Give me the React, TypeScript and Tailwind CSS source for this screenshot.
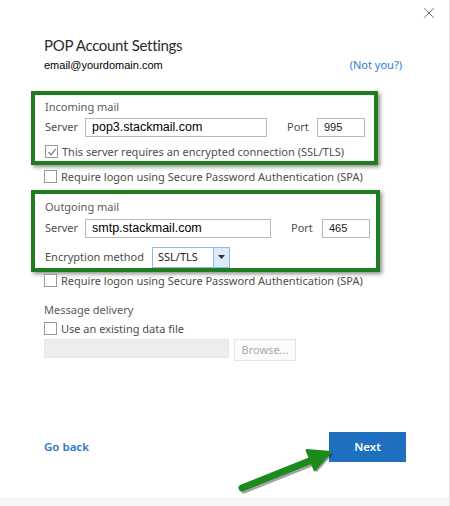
import { X } from "lucide-react";

const ui = "font-['Noto_Sans',sans-serif]";
const arial = "font-['Liberation_Sans',Arial,sans-serif]";

function Box({ checked }: { checked?: boolean }) {
  return (
    <span className="flex h-[13px] w-[13px] shrink-0 items-center justify-center border border-[#9a9a9a] bg-white">
      {checked && (
        <svg width="10" height="10" viewBox="0 0 10 10">
          <path d="M1.5 5.2 L4 7.8 L8.6 2" fill="none" stroke="#6b6b6b" strokeWidth="1.2" />
        </svg>
      )}
    </span>
  );
}

function CheckRow({ label, checked, className = "" }: { label: string; checked?: boolean; className?: string }) {
  return (
    <div className={`flex items-center gap-[4px] ${className}`}>
      <Box checked={checked} />
      <span className="whitespace-nowrap text-[11px] leading-none text-[#4d4d4d]">{label}</span>
    </div>
  );
}

function Field({ value, w, small }: { value: string; w: string; small?: boolean }) {
  return (
    <div className={`flex h-[19px] items-center border border-[#b9b9b9] bg-white px-[6px] ${w}`}>
      <span className={`${arial} ${small ? "text-[11px] text-[#222]" : "text-[12.5px] text-black"} leading-none`}>{value}</span>
    </div>
  );
}

export default function App() {
  return (
    <div className={`${ui} relative flex h-[506px] w-[450px] flex-col overflow-hidden border-r border-[#e2e2e2] bg-white`}>
      <div className="flex h-[26px] justify-end pr-[11px] pt-[4px]">
        <X className="h-[18px] w-[18px] text-[#555]" strokeWidth={1.1} />
      </div>

      <div className="flex flex-col pl-[44px]">
        <h1 className="mt-[9px] font-['Lato',sans-serif] text-[15px] leading-[20px] tracking-[-0.3px] text-[#2b2b2b]">POP Account Settings</h1>
        <div className="mt-[4px] flex items-center justify-between pr-[47px]">
          <span className={`${arial} text-[11px] leading-[12px] text-black`}>email@yourdomain.com</span>
          <span className="text-[11px] leading-[12px] text-[#2b7cd3]">(Not you?)</span>
        </div>

        {/* incoming */}
        <div className="ml-[-13px] mt-[20px] h-[74px] w-[347px] border-4 border-[#1f7d1f] pl-[10px] shadow-[2px_2px_4px_rgba(0,0,0,0.45)]">
          <div className="mt-[3px] h-[18px] text-[11px] leading-[18px] text-[#5a5a5a]">Incoming mail</div>
          <div className="flex h-[22px] items-center">
            <span className="w-[40px] text-[11px] text-[#4d4d4d]">Server</span>
            <Field value="pop3.stackmail.com" w="w-[182px]" />
            <span className="ml-[20px] w-[30px] text-[11px] text-[#4d4d4d]">Port</span>
            <Field value="995" w="w-[48px]" small />
          </div>
          <CheckRow label="This server requires an encrypted connection (SSL/TLS)" checked className="mt-[4px] h-[19px]" />
        </div>

        <CheckRow label="Require logon using Secure Password Authentication (SPA)" className="mt-[2px] h-[18px]" />

        {/* outgoing */}
        <div className="ml-[-13px] mt-[5px] h-[82px] w-[349px] border-4 border-[#1f7d1f] pl-[10px] shadow-[2px_2px_4px_rgba(0,0,0,0.45)]">
          <div className="mt-[4px] h-[18px] text-[11px] leading-[18px] text-[#5a5a5a]">Outgoing mail</div>
          <div className="flex h-[24px] items-center">
            <span className="w-[40px] text-[11px] text-[#4d4d4d]">Server</span>
            <Field value="smtp.stackmail.com" w="w-[186px]" />
            <span className="ml-[20px] w-[31px] text-[11px] text-[#4d4d4d]">Port</span>
            <Field value="465" w="w-[48px]" small />
          </div>
          <div className="mt-[6px] flex h-[22px] items-center">
            <span className="w-[107px] whitespace-nowrap text-[11px] text-[#4d4d4d]">Encryption method</span>
            <div className="flex h-[21px] w-[78px] border border-[#8cbbe8] bg-white">
              <span className="flex flex-1 items-center pl-[5px] text-[11px] text-[#222]">SSL/TLS</span>
              <span className="flex w-[16px] items-center justify-center border-l border-[#8cbbe8] bg-[#dcebf8]">
                <svg width="7" height="4" viewBox="0 0 7 4"><path d="M0 0h7L3.5 4z" fill="#333" /></svg>
              </span>
            </div>
          </div>
        </div>

        <CheckRow label="Require logon using Secure Password Authentication (SPA)" className="mt-[-1px] h-[18px]" />

        <div className="mt-[12px] text-[11px] leading-[18px] text-[#5a5a5a]">Message delivery</div>
        <CheckRow label="Use an existing data file" className="h-[18px]" />
        <div className="mt-[2px] flex items-start gap-[5px]">
          <div className="h-[19px] w-[185px] border border-[#e6e6e6] bg-[#ededed]" />
          <div className="flex h-[22px] w-[62px] items-center justify-center border border-[#e3e3e3] bg-[#fbfbfb] text-[11px] text-[#a8a8a8]">
            Browse...
          </div>
        </div>
      </div>

      <div className="mt-auto flex items-center justify-between pb-[35px] pl-[44px] pr-[43px]">
        <span className="text-[11.5px] font-semibold text-[#2a75c8]">Go back</span>
        <div className="flex h-[30px] w-[77px] items-center justify-center bg-[#1e6fc0] text-[11.5px] font-semibold text-white">Next</div>
      </div>
      <div className="h-[9px] bg-[#f8f8f8]" />

      <svg className="pointer-events-none absolute left-0 top-0" width="450" height="506" viewBox="0 0 450 506">
        <g transform="translate(2,2)" opacity="0.35">
          <line x1="242" y1="488" x2="312" y2="460" stroke="#000" strokeWidth="7" strokeLinecap="round" />
          <polygon points="331,452 314.7,470.4 306.5,450.1" fill="#000" />
        </g>
        <line x1="242" y1="488" x2="312" y2="460" stroke="#1d8a1d" strokeWidth="7" strokeLinecap="round" />
        <polygon points="331,452 314.7,470.4 306.5,450.1" fill="#1d8a1d" stroke="#1d8a1d" strokeLinejoin="round" strokeWidth="2" />
      </svg>
    </div>
  );
}
